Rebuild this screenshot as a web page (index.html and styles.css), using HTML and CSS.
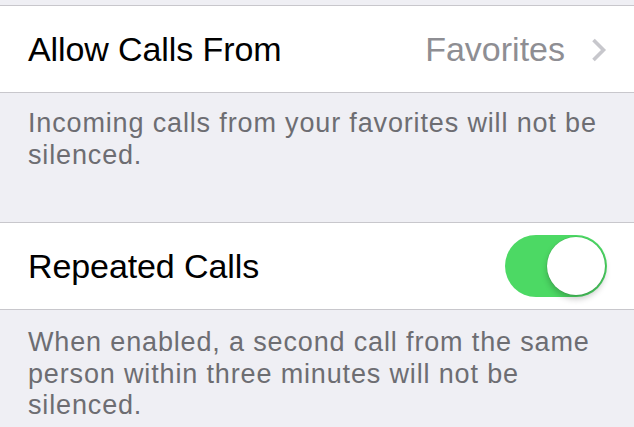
FILE: index.html
```html
<!DOCTYPE html>
<html>
<head>
<meta charset="utf-8">
<link rel="stylesheet" href="styles.css">
</head>
<body>
<div class="screen">
  <div class="top-gap"></div>
  <div class="cell">
    <span class="label">Allow Calls From</span>
    <span class="detail">
      <span class="value">Favorites</span>
      <svg class="chevron" width="16" height="24" viewBox="0 0 16 24"><path d="M2.5 2 L12.5 12 L2.5 22" fill="none" stroke="#c7c7cc" stroke-width="3.6" stroke-linecap="butt" stroke-linejoin="miter"/></svg>
    </span>
  </div>
  <div class="footer first">Incoming calls from your favorites will not be silenced.</div>
  <div class="cell">
    <span class="label">Repeated Calls</span>
    <span class="switch"><span class="knob"></span></span>
  </div>
  <div class="footer second">When enabled, a second call from the same person within three minutes will not be silenced.</div>
</div>
</body>
</html>
```
FILE: styles.css
```css
html, body {
  margin: 0;
  padding: 0;
  background: #efeff4;
}
body {
  font-family: "Liberation Sans", Arial, sans-serif;
  width: 634px;
  height: 427px;
  overflow: hidden;
}
.screen {
  display: flex;
  flex-direction: column;
}
.top-gap {
  height: 5px;
}
.cell {
  box-sizing: border-box;
  height: 88px;
  background: #fff;
  border-top: 1px solid #c8c7cc;
  border-bottom: 1px solid #c8c7cc;
  display: flex;
  align-items: center;
  justify-content: space-between;
  padding: 0 27px 0 28px;
  flex: none;
}
.label {
  font-size: 34px;
  color: #000;
  letter-spacing: -0.1px;
}
.detail {
  display: flex;
  align-items: center;
  gap: 26px;
}
.value {
  font-size: 34px;
  color: #8e8e93;
}
.chevron {
  display: block;
  margin-top: 1px;
}
.footer {
  font-size: 27px;
  line-height: 31.5px;
  letter-spacing: 0.85px;
  color: #6d6d72;
  padding: 16px 30px 0 28px;
  box-sizing: border-box;
}
.footer.first {
  height: 129px;
  flex: none;
  padding-top: 15px;
}
.footer.second {
  padding-top: 17px;
}
.switch {
  position: relative;
  width: 102px;
  height: 62px;
  border-radius: 31px;
  background: #4cd964;
  flex: none;
}
.knob {
  position: absolute;
  right: 2px;
  top: 2px;
  width: 58px;
  height: 58px;
  border-radius: 50%;
  background: #fff;
  box-shadow: 0 0 0 0.5px rgba(0,0,0,0.12), 0 4px 6px rgba(0,0,0,0.22);
}
```
